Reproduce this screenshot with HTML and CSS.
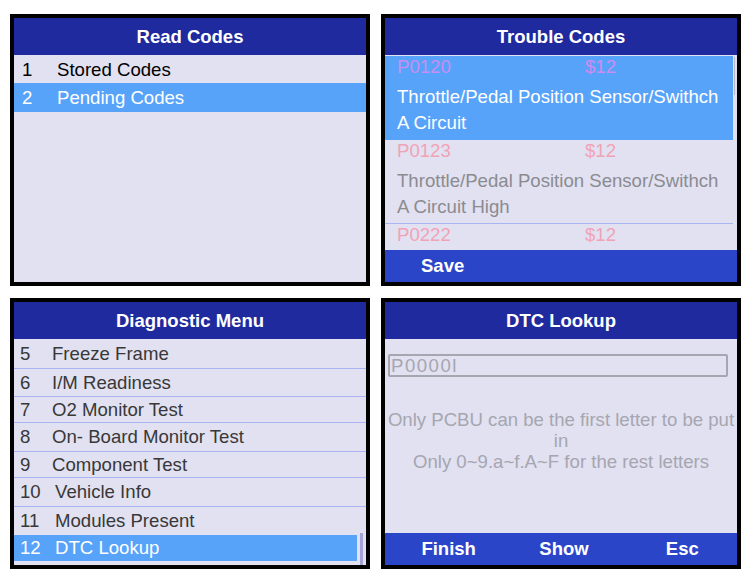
FILE: index.html
```html
<!DOCTYPE html>
<html>
<head>
<meta charset="utf-8">
<link rel="stylesheet" href="styles.css">
</head>
<body>
<div class="grid">
  <section class="panel">
    <div class="head">Read Codes</div>
    <div class="body">
      <div class="rc-row"><span class="rc-num">1</span>Stored Codes</div>
      <div class="rc-row sel"><span class="rc-num">2</span>Pending Codes</div>
    </div>
  </section>

  <section class="panel">
    <div class="head">Trouble Codes</div>
    <div class="body tc-body">
      <div class="tc-list">
        <div class="tc-item sel">
          <div class="tc-code"><span class="tc-id">P0120</span><span>$12</span></div>
          <div class="tc-desc">Throttle/Pedal Position Sensor/Swithch<br>A Circuit</div>
        </div>
        <div class="tc-item">
          <div class="tc-code"><span class="tc-id">P0123</span><span>$12</span></div>
          <div class="tc-desc">Throttle/Pedal Position Sensor/Swithch<br>A Circuit High</div>
        </div>
        <div class="tc-item last">
          <div class="tc-code"><span class="tc-id">P0222</span><span>$12</span></div>
        </div>
      </div>
      <div class="tc-scroll"></div>
    </div>
    <div class="foot"><span class="save">Save</span></div>
  </section>

  <section class="panel">
    <div class="head">Diagnostic Menu</div>
    <div class="body dm-body">
      <div class="dm-row"><span class="dm-num">5</span>Freeze Frame</div>
      <div class="dm-row"><span class="dm-num">6</span>I/M Readiness</div>
      <div class="dm-row"><span class="dm-num">7</span>O2 Monitor Test</div>
      <div class="dm-row"><span class="dm-num">8</span>On- Board Monitor Test</div>
      <div class="dm-row"><span class="dm-num">9</span>Component Test</div>
      <div class="dm-row"><span class="dm-num wide">10</span>Vehicle Info</div>
      <div class="dm-row"><span class="dm-num wide">11</span>Modules Present</div>
      <div class="dm-row sel"><span class="dm-num wide">12</span>DTC Lookup</div>
      <div class="dm-scroll"></div>
    </div>
  </section>

  <section class="panel">
    <div class="head">DTC Lookup</div>
    <div class="body dl-body">
      <div class="dl-input">P0000l</div>
      <div class="dl-msg">Only PCBU can be the first letter to be put<br>in<br>Only 0~9.a~f.A~F for the rest letters</div>
    </div>
    <div class="foot three"><span>Finish</span><span>Show</span><span>Esc</span></div>
  </section>
</div>
</body>
</html>
```

FILE: styles.css
```css
* { box-sizing: border-box; }
html, body { margin: 0; padding: 0; background: #fff; }
body {
  font-family: "Liberation Sans", Arial, sans-serif;
  width: 750px;
  height: 583px;
  overflow: hidden;
}
.grid {
  display: grid;
  grid-template-columns: 360px 360px;
  grid-template-rows: 272px 271px;
  column-gap: 11px;
  row-gap: 12px;
  padding: 14px 0 0 10px;
}
.panel {
  border: 4px solid #000;
  background: #e1e1f1;
  display: flex;
  flex-direction: column;
  overflow: hidden;
}
.head {
  height: 37px;
  flex: none;
  background: #1f2a9f;
  color: #fff;
  font-weight: bold;
  font-size: 18.5px;
  display: flex;
  align-items: center;
  justify-content: center;
  padding-top: 1px;
}
.body {
  flex: 1;
  position: relative;
  overflow: hidden;
}
.foot {
  height: 32px;
  flex: none;
  background: #2b45c9;
  color: #fff;
  font-weight: bold;
  font-size: 18.5px;
  display: flex;
  align-items: center;
}
.save { padding-left: 36px; }
.foot.three {
  display: grid;
  grid-template-columns: repeat(3, 1fr);
  padding-left: 6px;
  text-align: center;
  align-items: center;
}
.foot.three span:last-child { padding-left: 6px; }

/* Read codes */
.rc-row {
  height: 28px;
  display: flex;
  align-items: center;
  font-size: 18.6px;
  color: #000;
  padding-left: 8px;
  padding-top: 1px;
}
.rc-row.sel { background: #58a3fa; color: #fff; height: 29px; }
.rc-num { width: 35px; }

/* Trouble codes */
.tc-body { padding-top: 1px; }
.tc-list { width: 348px; }
.tc-item {
  padding: 0 0 3px 12px;
  border-bottom: 1px solid #a9b4f0;
  font-size: 18.6px;
}
.tc-item.sel { background: #58a3fa; border-bottom-color: #58a3fa; }
.tc-item.last { border-bottom: none; }
.tc-code {
  height: 22px;
  display: flex;
  align-items: center;
  color: #f1a3b6;
}
.tc-item.sel .tc-code { color: #c98ef2; }
.tc-id { width: 188px; }
.tc-desc {
  padding-top: 6px;
  line-height: 26px;
  color: #8b8b90;
}
.tc-item.sel .tc-desc { color: #fff; }
.tc-scroll {
  position: absolute;
  right: 2px;
  top: 2px;
  width: 1px;
  height: 38px;
  background: #b8b8c8;
}

/* Diagnostic menu */
.dm-row {
  display: flex;
  align-items: center;
  font-size: 18.6px;
  color: #383838;
  padding-left: 6px;
  border-bottom: 1px solid #a9b4f0;
}
.dm-row:nth-child(1) { height: 30px; }
.dm-row:nth-child(2) { height: 28px; }
.dm-row:nth-child(3) { height: 26px; }
.dm-row:nth-child(4) { height: 29px; }
.dm-row:nth-child(5) { height: 26px; }
.dm-row:nth-child(6) { height: 29px; }
.dm-row:nth-child(7) { height: 28px; border-bottom: none; }
.dm-row.sel {
  height: 26px;
  width: 343px;
  border-bottom: none;
  background: #58a3fa;
  color: #fff;
}
.dm-num { width: 32px; }
.dm-num.wide { width: 35px; }
.dm-scroll {
  position: absolute;
  left: 346px;
  bottom: 0;
  width: 3px;
  height: 32px;
  background: #a3a3d6;
}

/* DTC lookup */
.dl-body { padding: 15px 9px 0 3px; }
.dl-input {
  height: 23px;
  border: 2px solid #a6a6b0;
  border-radius: 2px;
  color: #a6a6b0;
  font-size: 18.6px;
  letter-spacing: 1.5px;
  line-height: 19px;
  padding-left: 1px;
}
.dl-msg {
  margin-top: 32px;
  margin-left: -3px;
  margin-right: -9px;
  text-align: center;
  color: #a6a6b0;
  font-size: 18.6px;
  line-height: 21px;
}
```
